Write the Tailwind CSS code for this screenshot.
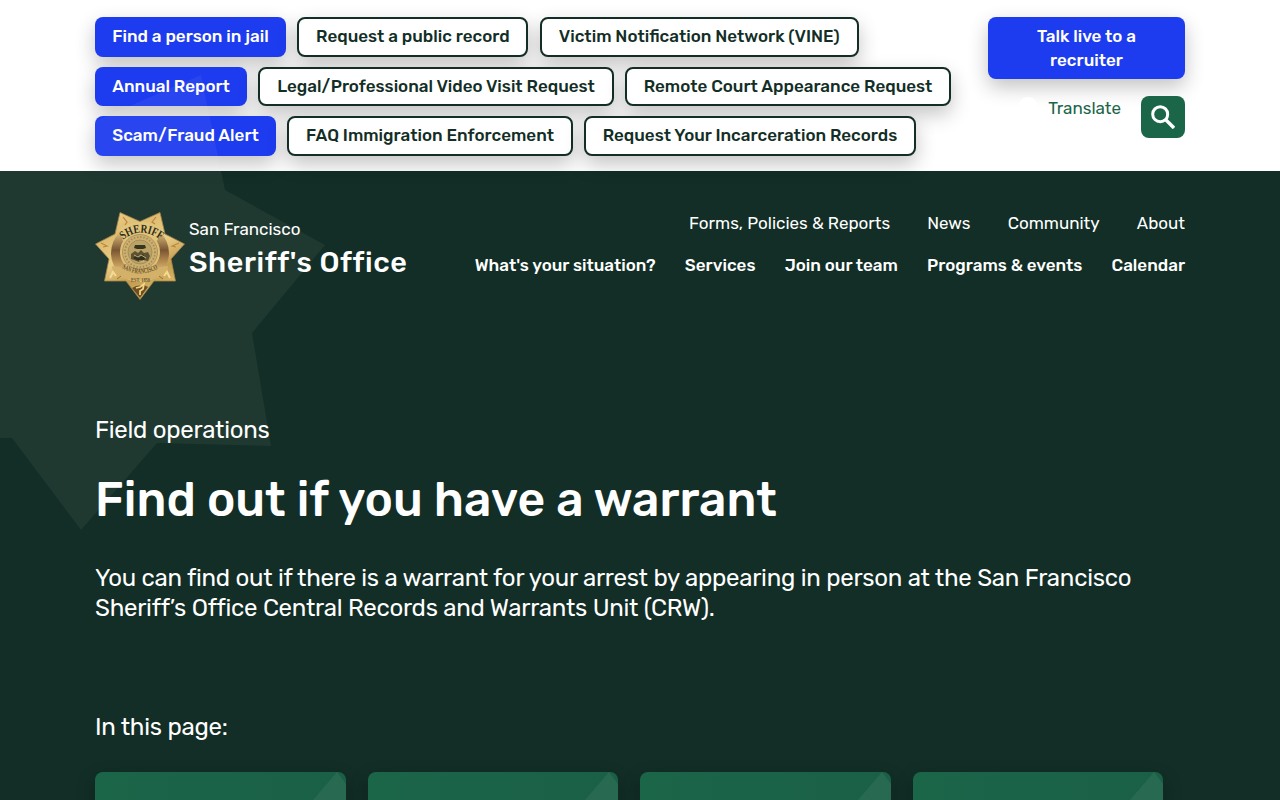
<!DOCTYPE html>
<html lang="en">
<head>
    <meta charset="utf-8">
    <meta name="viewport" content="width=device-width, initial-scale=1">
    <title>Find out if you have a warrant - San Francisco Sheriff's Office</title>
    <script src="https://cdn.jsdelivr.net/npm/@tailwindcss/browser@4"></script>
</head>
<body class="relative h-[800px] overflow-hidden bg-[#122e26] font-[Rubik,Roboto,sans-serif] text-white">

    <!-- Quick links -->
    <div class="h-[171px] bg-white">
        <div class="mx-auto flex w-[1090px] justify-between pt-[17px]">
            <div class="flex flex-col gap-[10px] text-[17px] leading-6 font-medium whitespace-nowrap text-[#122e26]">
                <div class="flex h-[39.5px] gap-[11.4px]">
                    <a href="#" class="flex w-[191px] justify-center rounded-lg bg-[#1d3bef] pt-[7px] text-white shadow-[0_8px_20px_rgba(0,0,0,0.24)]">Find a person in jail</a>
                    <a href="#" class="flex w-[231px] justify-center rounded-lg border-2 border-[#122e26] bg-white pt-[5px] shadow-[0_8px_20px_rgba(0,0,0,0.24)]">Request a public record</a>
                    <a href="#" class="flex w-[319px] justify-center rounded-lg border-2 border-[#122e26] bg-white pt-[5px] shadow-[0_8px_20px_rgba(0,0,0,0.24)]">Victim Notification Network (VINE)</a>
                </div>
                <div class="flex h-[39.5px] gap-[11px]">
                    <a href="#" class="flex w-[152px] justify-center rounded-lg bg-[#1d3bef] pt-[7px] text-white shadow-[0_8px_20px_rgba(0,0,0,0.24)]">Annual Report</a>
                    <a href="#" class="flex w-[356px] justify-center rounded-lg border-2 border-[#122e26] bg-white pt-[5px] shadow-[0_8px_20px_rgba(0,0,0,0.24)]">Legal/Professional Video Visit Request</a>
                    <a href="#" class="flex w-[326px] justify-center rounded-lg border-2 border-[#122e26] bg-white pt-[5px] shadow-[0_8px_20px_rgba(0,0,0,0.24)]">Remote Court Appearance Request</a>
                </div>
                <div class="flex h-[39.5px] gap-[11px]">
                    <a href="#" class="flex w-[181px] justify-center rounded-lg bg-[#1d3bef] pt-[7px] text-white shadow-[0_8px_20px_rgba(0,0,0,0.24)]">Scam/Fraud Alert</a>
                    <a href="#" class="flex w-[286px] justify-center rounded-lg border-2 border-[#122e26] bg-white pt-[5px] shadow-[0_8px_20px_rgba(0,0,0,0.24)]">FAQ Immigration Enforcement</a>
                    <a href="#" class="flex w-[332px] justify-center rounded-lg border-2 border-[#122e26] bg-white pt-[5px] shadow-[0_8px_20px_rgba(0,0,0,0.24)]">Request Your Incarceration Records</a>
                </div>
            </div>

            <div class="w-[197px]">
                <a href="#" class="block h-[62px] rounded-lg bg-[#1d3bef] pt-[7px] text-center text-[17px] leading-6 font-medium shadow-[0_8px_20px_rgba(0,0,0,0.24)]">Talk live to a<br>recruiter</a>
                <div class="mt-[17px] flex justify-end">
                    <span class="mt-px mr-2.5 size-5 rounded-full bg-white"></span>
                    <a href="#" class="mr-5 text-[17px] leading-6 text-[#1b6549]">Translate</a>
                    <button class="flex h-[42px] w-11 items-center justify-center rounded-lg bg-[#1b6549]">
                        <svg class="size-6" viewBox="0 0 24 24" fill="none" stroke="#fff" stroke-width="3">
                            <circle cx="9.2" cy="9.2" r="7.5" />
                            <path d="M14.5 14.5 23 23" stroke-width="3.4" />
                        </svg>
                    </button>
                </div>
            </div>
        </div>
    </div>

    <!-- Large star behind the header -->
    <svg class="pointer-events-none absolute top-0 left-0 h-[540px] w-[340px]" viewBox="0 0 340 540">
        <path fill="#fff" fill-opacity="0.055" d="M0 128 93 122 201 75 225 190 325 245 252 333 271 446 157 443 81 530 12 438H0Z" />
    </svg>

    <div class="relative mx-auto w-[1090px]">
        <header class="flex h-[129px] justify-between pt-10">
            <a href="#" class="flex gap-1">
                <svg class="h-[90px] w-[90px]" viewBox="0 0 90 90">
                    <defs>
                        <linearGradient id="gold" x1="0" y1="0" x2="0.5" y2="1">
                            <stop offset="0" stop-color="#f0d590" />
                            <stop offset="0.3" stop-color="#dcbc70" />
                            <stop offset="0.55" stop-color="#e9cf86" />
                            <stop offset="0.8" stop-color="#c39c50" />
                            <stop offset="1" stop-color="#d9b968" />
                        </linearGradient>
                        <linearGradient id="ring" x1="0" y1="0" x2="0" y2="1">
                            <stop offset="0.15" stop-color="#d9bc78" />
                            <stop offset="0.45" stop-color="#7a5533" />
                            <stop offset="0.65" stop-color="#b58c50" />
                            <stop offset="0.9" stop-color="#ead08a" />
                        </linearGradient>
                        <path id="arcTop" d="M28 29Q46 14 67 30" />
                        <path id="arcBottom" d="M27 57Q45 68 64 57" />
                    </defs>
                    <path fill="url(#gold)" stroke="#a78245" stroke-width="0.8" d="M25 1.500 45 10.500 65 1.500 70 23 89.500 33 76 48 80.500 70 59 70 45 88.500 31 70 9.500 70 14 48 0.500 33 20 23Z" />
                    <circle cx="45" cy="42" r="29" fill="url(#ring)" />
                    <circle cx="45" cy="41" r="20" fill="#dec078" />
                    <path fill="#e2c57c" d="M24 18Q45 4 67 18L62 30Q45 19 28 30Z" />
                    <path fill="#d3b169" d="M17 55Q45 60 73 55L72 63Q45 77 18 63Z" />
                    <circle cx="45" cy="41" r="17.5" fill="#cbb070" stroke="#aa8a50" stroke-width="0.8" />
                    <circle cx="45" cy="41" r="15" fill="none" stroke="#a48a52" stroke-width="1.8" stroke-dasharray="1.4 1.8" />
                    <circle cx="45" cy="41" r="12" fill="#bba266" stroke="#9c8250" stroke-width="0.7" />
                    <path fill="#38351f" d="M40 34h10l1 3-3 1h-6l-3-1Z" />
                    <path fill="#5c5131" d="M36 43l4-3 3 2 3-3 3 3 4-1 2 4-2 5-5-1-4 2-5-2-3-1Z" />
                    <path fill="#322f1d" d="M38 47l4-3 2 3 4-4 2 5-3 2-5-1Z" />
                    <path fill="none" stroke="#dfc788" stroke-width="0.8" d="M39 44l4 2 3-2 5 3M44 50h5" />
                    <path fill="none" stroke="#c08440" stroke-width="1.2" d="M28 6l4 5-2 3M61 6l-4 5 3 2M6 32l6 3-4 1M84 32l-7 3 4 1" />
                    <path fill="none" stroke="#f6da94" stroke-width="2" d="M15 67l3-6 3 4M75 67l-3-6-3 4" />
                    <path fill="none" stroke="#9a6e31" stroke-width="1" d="M22 68l4-3M68 68l-4-3" />
                    <path fill="#6f4e24" d="M37 77l4-2 8-1 4 2-8 11Z" />
                    <path fill="none" stroke="#f2d584" stroke-width="1.8" d="M41 77l4-1 4-3-1 5-3 2v4" />
                    <text class="font-[Liberation_Serif,serif] text-[12px] font-bold" fill="#302d1b"><textPath href="#arcTop" textLength="41" lengthAdjust="spacingAndGlyphs">SHERIFF</textPath></text>
                    <text class="font-[Liberation_Serif,serif] text-[7.5px] font-bold" fill="#6b5530"><textPath href="#arcBottom" textLength="38" lengthAdjust="spacingAndGlyphs">SAN FRANCISCO</textPath></text>
                    <text x="36" y="71" class="font-[Liberation_Serif,serif] text-[6.5px] font-bold" fill="#70562f" textLength="19" lengthAdjust="spacingAndGlyphs">EST. 1850</text>
                </svg>
                <div class="whitespace-nowrap">
                    <div class="pt-[6px] text-[17px] leading-6">San Francisco</div>
                    <div class="text-[28.8px] leading-[42px] font-medium tracking-[0.58px]">Sheriff's Office</div>
                </div>
            </a>
            <nav class="text-[17px] leading-6 whitespace-nowrap">
                <div class="flex justify-end gap-[37.2px]">
                    <a href="#">Forms, Policies &amp; Reports</a>
                    <a href="#">News</a>
                    <a href="#">Community</a>
                    <a href="#">About</a>
                </div>
                <div class="mt-[18px] flex justify-end gap-[29.2px] font-medium">
                    <a href="#">What's your situation?</a>
                    <a href="#">Services</a>
                    <a href="#">Join our team</a>
                    <a href="#">Programs &amp; events</a>
                    <a href="#">Calendar</a>
                </div>
            </nav>
        </header>

        <!-- Page title -->
        <main class="pt-[115px] whitespace-nowrap">
            <p class="text-2xl leading-[30px] tracking-[-0.25px]">Field operations</p>
            <h1 class="mt-[25px] text-5xl leading-[60px] font-medium">Find out if you have a warrant</h1>
            <p class="mt-[33px] text-2xl leading-[30px] tracking-[-0.25px]">You can find out if there is a warrant for your arrest by appearing in person at the San Francisco<br>Sheriff’s Office Central Records and Warrants Unit (CRW).</p>

            <h2 class="mt-[89px] text-2xl leading-[30px] tracking-[-0.25px]">In this page:</h2>
            <div class="mt-[30px] grid h-7 grid-cols-[251px_250px_251px_250px] gap-[22px]">
                <a href="#" class="flex justify-end overflow-hidden rounded-t-lg bg-linear-to-r from-[#1b6549] to-[#1a6047] shadow-[0_8px_20px_rgba(0,0,0,0.24)]">
                    <svg class="h-7 w-[60px]" viewBox="0 0 60 28"><path fill="#fff" fill-opacity="0.06" d="M27 28 51 0 60 12V28Z" /></svg>
                </a>
                <a href="#" class="flex justify-end overflow-hidden rounded-t-lg bg-linear-to-r from-[#1b6549] to-[#1a6047] shadow-[0_8px_20px_rgba(0,0,0,0.24)]">
                    <svg class="h-7 w-[60px]" viewBox="0 0 60 28"><path fill="#fff" fill-opacity="0.06" d="M27 28 51 0 60 12V28Z" /></svg>
                </a>
                <a href="#" class="flex justify-end overflow-hidden rounded-t-lg bg-linear-to-r from-[#1b6549] to-[#1a6047] shadow-[0_8px_20px_rgba(0,0,0,0.24)]">
                    <svg class="h-7 w-[60px]" viewBox="0 0 60 28"><path fill="#fff" fill-opacity="0.06" d="M27 28 51 0 60 12V28Z" /></svg>
                </a>
                <a href="#" class="flex justify-end overflow-hidden rounded-t-lg bg-linear-to-r from-[#1b6549] to-[#1a6047] shadow-[0_8px_20px_rgba(0,0,0,0.24)]">
                    <svg class="h-7 w-[60px]" viewBox="0 0 60 28"><path fill="#fff" fill-opacity="0.06" d="M27 28 51 0 60 12V28Z" /></svg>
                </a>
            </div>
        </main>
    </div>
</body>
</html>
